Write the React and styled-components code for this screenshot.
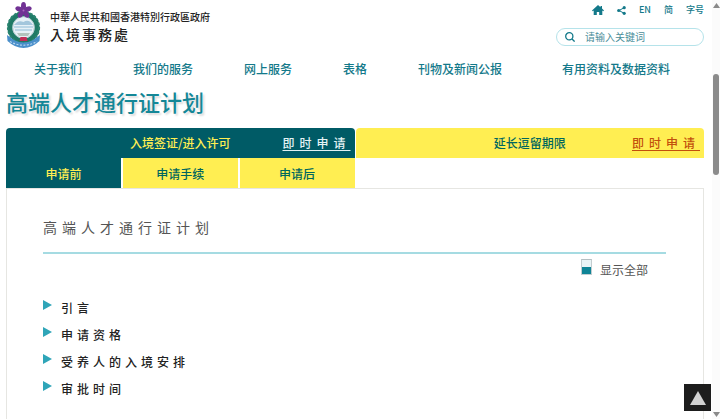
import React, { useState } from 'react';
import styled, { createGlobalStyle } from 'styled-components';

const navItems = ['关于我们', '我们的服务', '网上服务', '表格', '刊物及新闻公报', '有用资料及数据资料'];
const steps = ['申请前', '申请手续', '申请后'];
const topics = ['引言', '申请资格', '受养人的入境安排', '审批时间'];
const petals = [0, 72, 144, 216, 288];

function Crest() {
  return (
    <svg width="36" height="47" viewBox="0 0 36 47" aria-hidden="true">
      {/* wreath */}
      <circle cx="17.5" cy="25.5" r="13.6" fill="#e6f1f7" stroke="#1f7a66" strokeWidth="5" />
      <circle cx="17.5" cy="25.5" r="15.6" fill="none" stroke="#2b8570" strokeWidth="2" strokeDasharray="2.6 1.6" />
      <circle cx="17.5" cy="25.5" r="10.8" fill="none" stroke="#a9c3c8" strokeWidth="0.8" />
      {/* harbour */}
      <path d="M8 23 Q12 17.5 17.5 20 Q23 16.500 27 23 Z" fill="#a3c6dc" />
      <path d="M8 25h19M9 28h17" stroke="#8fbbd6" strokeWidth="1" />
      <path d="M11 31h13l-2 3h-9z" fill="#b2c3bd" />
      {/* bauhinia */}
      {petals.map((deg) => (
        <ellipse key={deg} cx="17.5" cy="4.2" rx="2.5" ry="4.2" fill="#713294" transform={`rotate(${deg} 17.5 8.5)`} />
      ))}
      <circle cx="17.5" cy="8.5" r="1" fill="#a968c0" />
      {/* ribbon */}
      <path d="M1 33 L8 38 Q17.5 43 27 38 L34 33 L33.5 39 Q26 46 17.5 46 Q9 46 1.500 39 Z" fill="#4a8fca" />
      <path d="M4 39.5 Q17.5 47 31 39.5" fill="none" stroke="#b7d5ee" strokeWidth="1.2" strokeDasharray="2 1.5" />
      <path d="M14.5 35h6l1 4h-8z" fill="#c22e58" />
    </svg>
  );
}

export default function App() {
  const [step, setStep] = useState(0);
  const [showAll, setShowAll] = useState(false);

  return (
    <Window>
      <GlobalStyle />
      <Page>
        <Header>
          <Brand href="#">
            <Crest />
            <BrandText lang="zh-Hant">
              <Region>中華人民共和國香港特別行政區政府</Region>
              <Department>入境事務處</Department>
            </BrandText>
          </Brand>
          <Tools>
            <ToolLinks>
              <ToolLink href="#" aria-label="主页">
                <svg width="12" height="10" viewBox="0 0 12 10" fill="currentColor">
                  <path d="M6 0 L8.5 2.2 V1 H10 V3.6 L12 5.5 L11.3 6.2 L10.3 5.4 V10 H7.2 V7 H4.8 V10 H1.7 V5.4 L0.7 6.2 L0 5.5 Z" />
                </svg>
              </ToolLink>
              <ToolLink href="#" aria-label="分享">
                <svg width="9" height="9" viewBox="0 0 9 9" fill="currentColor">
                  <path d="M7 1.8 L2 4.5 L7 7.2" fill="none" stroke="currentColor" strokeWidth="1" />
                  <circle cx="7.2" cy="1.7" r="1.6" />
                  <circle cx="1.7" cy="4.5" r="1.6" />
                  <circle cx="7.2" cy="7.3" r="1.6" />
                </svg>
              </ToolLink>
              <ToolLink href="#">EN</ToolLink>
              <ToolLink href="#">简</ToolLink>
              <ToolLink href="#">字号</ToolLink>
            </ToolLinks>
            <SearchBox>
              <svg width="10" height="10" viewBox="0 0 10 10" fill="none" stroke="#13798a" strokeWidth="1.3">
                <circle cx="4.3" cy="4.3" r="3.6" />
                <path d="M7 7 L9.6 9.6" />
              </svg>
              <SearchInput type="text" placeholder="请输入关键词" aria-label="请输入关键词" />
            </SearchBox>
          </Tools>
        </Header>

        <Nav>
          {navItems.map((item) => (
            <NavLink href="#" key={item}>{item}</NavLink>
          ))}
        </Nav>

        <Title>高端人才通行证计划</Title>

        <Tabs>
          <Tab $active>
            <TabButton type="button">入境签证/进入许可</TabButton>
            <ApplyLink href="#">即时申请</ApplyLink>
          </Tab>
          <Tab>
            <TabButton type="button">延长逗留期限</TabButton>
            <ApplyLink href="#">即时申请</ApplyLink>
          </Tab>
          <Steps>
            {steps.map((name, i) => (
              <Step type="button" key={name} $active={i === step} onClick={() => setStep(i)}>
                {name}
              </Step>
            ))}
          </Steps>
        </Tabs>

        <Panel>
          <PanelTitle>高端人才通行证计划</PanelTitle>
          <ShowAll type="button" aria-pressed={showAll} onClick={() => setShowAll(!showAll)}>
            <Switch />
            显示全部
          </ShowAll>
          <Topics>
            {topics.map((topic) => (
              <li key={topic}>
                <Topic type="button">
                  <Marker width="9" height="10" viewBox="0 0 9 10">
                    <path d="M0 0 L9 5 L0 10 Z" fill="#2fa5b8" />
                  </Marker>
                  {topic}
                </Topic>
              </li>
            ))}
          </Topics>
        </Panel>
      </Page>

      <Scrollbar aria-hidden="true">
        <svg width="7" height="5" viewBox="0 0 7 5"><path d="M3.5 0 L7 5 H0 Z" fill="#8a8a8a" /></svg>
        <Track>
          <Thumb />
        </Track>
        <svg width="7" height="5" viewBox="0 0 7 5"><path d="M0 0 H7 L3.5 5 Z" fill="#8a8a8a" /></svg>
      </Scrollbar>

      <BackToTop type="button" aria-label="返回页首">
        <svg width="16" height="14" viewBox="0 0 16 14"><path d="M8 0 L16 14 H0 Z" fill="#d2d2d2" /></svg>
      </BackToTop>
    </Window>
  );
}

const GlobalStyle = createGlobalStyle`
  * {
    box-sizing: border-box;
  }

  body {
    margin: 0;
    background: #fff;
    font-family: "Noto Sans CJK SC", "Noto Sans", sans-serif;
    font-size: 12px;
  }

  button, input {
    font: inherit;
    color: inherit;
    padding: 0;
    border: 0;
    background: none;
  }

  button {
    cursor: pointer;
  }

  a {
    color: inherit;
    text-decoration: none;
  }

  svg {
    display: block;
    flex-shrink: 0;
  }
`

const Window = styled.div`
  display: flex;
  height: 100vh;
`

const Page = styled.div`
  flex: 1;
  min-width: 0;
  display: flex;
  flex-direction: column;
  overflow: hidden;
  padding: 0 8px 0 6px;
`

const Header = styled.header`
  display: flex;
  justify-content: space-between;
  padding-top: 2px;
`

const Brand = styled.a`
  display: flex;
  gap: 8px;
  color: #222;
`

const BrandText = styled.span`
  display: flex;
  flex-direction: column;
  padding-top: 7px;
  font-family: "Noto Sans CJK TC", "Noto Sans", sans-serif;
  font-weight: 500;
`

const Region = styled.span`
  font-size: 10px;
  line-height: 16px;
`

const Department = styled.span`
  font-size: 14px;
  line-height: 18px;
  letter-spacing: 2px;
`

const Tools = styled.div`
  display: flex;
  flex-direction: column;
  align-items: flex-end;
  gap: 10px;
  color: #13798a;
`

const ToolLinks = styled.div`
  display: flex;
  align-items: center;
  gap: 13px;
  height: 16px;
`

const ToolLink = styled.a`
  font-size: 9px;
  line-height: 16px;
  font-weight: 500;
`

const SearchBox = styled.label`
  display: flex;
  align-items: center;
  gap: 10px;
  width: 148px;
  height: 18px;
  padding: 0 8px;
  border: 1px solid #b5e3ea;
  border-radius: 9px;
`

const SearchInput = styled.input`
  flex: 1;
  min-width: 0;
  font-size: 10px;
  line-height: 16px;
  outline: none;

  &::placeholder {
    color: #4b8e99;
    opacity: 1;
  }
`

const Nav = styled.nav`
  display: flex;
  gap: 51px;
  padding: 10px 34px 0 28px;
`

const NavLink = styled.a`
  color: #13798a;
  line-height: 20px;
  font-weight: 500;
  white-space: nowrap;

  &:last-child {
    margin-left: auto;
  }
`

const Title = styled.h1`
  margin: 6px 0 11px;
  color: #148797;
  font-size: 22px;
  line-height: 32px;
  font-weight: 500;
  text-shadow: 2px 2px 2px #ddd;
`

const Tabs = styled.div`
  display: grid;
  grid-template-columns: 1fr 1fr;
  column-gap: 1px;
`

const Tab = styled.div`
  display: grid;
  grid-template-columns: 1fr auto 1fr;
  align-items: center;
  height: 30px;
  padding: 0 4px;
  border-radius: 4px 4px 0 0;
  background: ${(p) => (p.$active ? '#005b66' : '#ffee52')};
  color: ${(p) => (p.$active ? '#ffee52' : '#00665e')};

  a {
    color: ${(p) => (p.$active ? '#e4f3f5' : '#c2500c')};
  }
`

const TabButton = styled.button`
  grid-column: 2;
  font-weight: 500;
  line-height: 20px;
`

const ApplyLink = styled.a`
  justify-self: end;
  font-weight: 500;
  line-height: 20px;
  letter-spacing: 5px;
  text-decoration: underline;
  text-underline-offset: 2px;
`

const Steps = styled.div`
  display: grid;
  grid-template-columns: repeat(3, 1fr);
  column-gap: 2px;
`

const Step = styled.button`
  height: 30px;
  background: ${(p) => (p.$active ? '#005b66' : '#ffee52')};
  color: ${(p) => (p.$active ? '#ffee52' : '#00665e')};
  font-weight: 500;
`

const Panel = styled.main`
  flex: 1;
  display: flex;
  flex-direction: column;
  padding: 26px 37px 0 36px;
  border: 1px solid #e6e6e2;
  border-bottom: 0;
`

const PanelTitle = styled.h2`
  margin: 0;
  padding-bottom: 13px;
  border-bottom: 2px solid #a5dbe2;
  color: #555;
  font-size: 14px;
  line-height: 24px;
  font-weight: 400;
  letter-spacing: 5px;
`

const ShowAll = styled.button`
  display: flex;
  align-items: flex-start;
  align-self: flex-end;
  gap: 8px;
  margin-right: 18px;
  padding-top: 5px;
  color: #555;
  line-height: 22px;
`

const Switch = styled.span`
  width: 11px;
  height: 16px;
  border: 1px solid #c3cdd0;
  border-top-color: #b5bfc2;
  background: linear-gradient(#eaf4f6 50%, #0f8496 50%);
`

const Topics = styled.ul`
  list-style: none;
  margin: 13px 0 0;
  padding: 0;
`

const Topic = styled.button`
  display: flex;
  align-items: center;
  gap: 9px;
  height: 27px;
  color: #222;
  font-weight: 500;
  letter-spacing: 4px;
`

const Marker = styled.svg`
  margin-bottom: 5px;
`

const Scrollbar = styled.div`
  display: flex;
  flex-direction: column;
  align-items: center;
  width: 8px;
  padding: 3px 0 2px;
  background: #fbfbfb;
`

const Track = styled.div`
  flex: 1;
  padding-top: 66px;
`

const Thumb = styled.div`
  width: 6px;
  height: 101px;
  border-radius: 3px;
  background: #8b8b8b;
`

const BackToTop = styled.button`
  position: fixed;
  right: 9px;
  bottom: 8px;
  display: flex;
  align-items: center;
  justify-content: center;
  width: 27px;
  height: 27px;
  background: #1d1d1d;
`
